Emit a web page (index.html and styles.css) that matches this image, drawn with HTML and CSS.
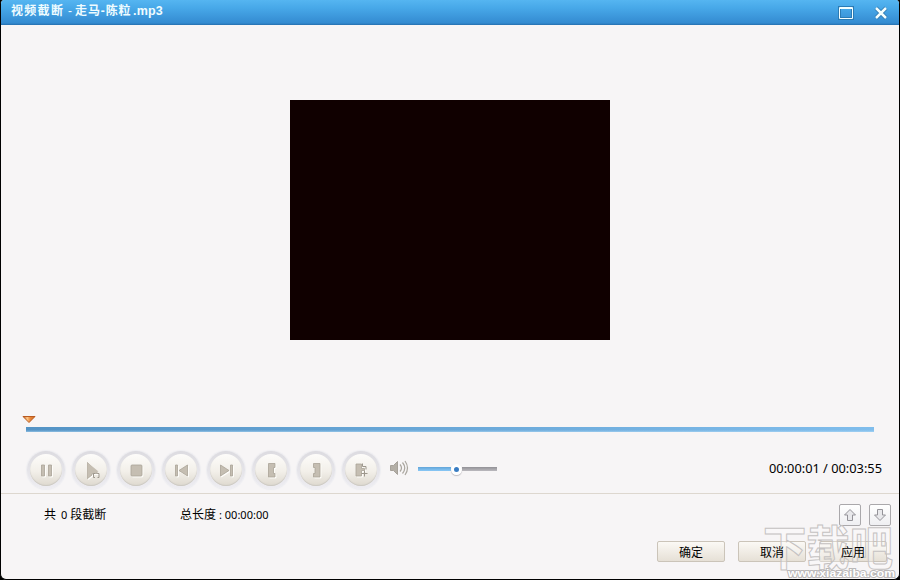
FILE: index.html
```html
<!DOCTYPE html>
<html lang="zh-CN">
<head>
    <meta charset="utf-8">
    <title>视频截断</title>
    <link rel="stylesheet" href="styles.css">
</head>
<body>

<div class="window">
    <div class="titlebar">
        <div class="title"><span class="title-cn">视频截断</span><span class="title-dash">-</span><span class="title-song">走马-陈粒</span><span class="title-ext">.mp3</span></div>
        <svg class="win-icon" width="16" height="14" viewBox="0 0 16 14">
            <path d="M1.5 1.5h13v11h-13z" fill="none" stroke="#2b7bb5" stroke-width="3"/>
            <path d="M1.5 1.5h13v11h-13zM1 2.5h14" fill="none" stroke="#f4ffff"/>
        </svg>
        <svg class="win-icon" width="16" height="14" viewBox="0 0 16 14">
            <path d="M3 2l10 10M13 2L3 12" stroke="#2b74ac" stroke-width="4"/>
            <path d="M3 2l10 10M13 2L3 12" stroke="#f4ffff" stroke-width="2.5"/>
        </svg>
    </div>

    <div class="preview">
        <div class="video"></div>
    </div>

    <div class="timeline">
        <svg class="marker" width="14" height="9" viewBox="0 0 14 9">
            <defs>
                <linearGradient id="orange" x1="0" x2="1">
                    <stop offset="0" stop-color="#b8571f"/>
                    <stop offset=".35" stop-color="#ffc888"/>
                    <stop offset=".6" stop-color="#e8883a"/>
                    <stop offset="1" stop-color="#cd661c"/>
                </linearGradient>
            </defs>
            <path d="M1 1.5h12L7 7.5z" fill="url(#orange)" stroke="#b95a20"/>
        </svg>
        <div class="track"></div>
    </div>

    <div class="controls">
        <button class="round-btn"><svg width="22" height="22" viewBox="0 0 22 22"><path class="glyph" d="M5.5 5h3v11h-3zM12.5 5h3v11h-3z"/></svg></button>
        <button class="round-btn"><svg width="22" height="22" viewBox="0 0 22 22"><path class="glyph" d="M6.5 2.5v16l4.500-3.500v-1.500h6z"/><path class="glyph-fill" d="M6.500 2.500L17.500 11.500L11 13.500L6.500 18.500z"/><path class="bracket" d="M14 13.500h-1.500v4h1.500M16.500 13.500h1.500v4h-1.500"/></svg></button>
        <button class="round-btn"><svg width="22" height="22" viewBox="0 0 22 22"><rect class="glyph" x="5" y="5" width="11" height="11" rx="1"/></svg></button>
        <button class="round-btn"><svg width="22" height="22" viewBox="0 0 22 22"><path class="glyph" d="M4.500 5h2v11h-2zM16.500 5v11L8 10.500z"/></svg></button>
        <button class="round-btn"><svg width="22" height="22" viewBox="0 0 22 22"><path class="glyph" d="M14.500 5h2v11h-2zM4.500 5v11L13 10.500z"/></svg></button>
        <button class="round-btn"><svg width="22" height="22" viewBox="0 0 22 22"><path class="glyph" d="M7.500 3.500h6.500v4h-1.500v6H14v3.500H7.500z"/></svg></button>
        <button class="round-btn"><svg width="22" height="22" viewBox="0 0 22 22"><path class="glyph" d="M14 3.500H7.500v4H9v6H7.500v3.500H14z"/></svg></button>
        <button class="round-btn"><svg width="22" height="22" viewBox="0 0 22 22"><path class="glyph" d="M5 4h5.500v4.500h3v2h-3V16H5z"/><path class="bracket" d="M11.500 3.500v3h3.500v3M10.500 13.500h6M13.500 10.500v6"/></svg></button>

        <svg class="speaker" width="20" height="18" viewBox="0 0 20 18">
            <path d="M1.500 6.500h3l4-4v13l-4-4h-3z" fill="#b3aea6" stroke="#a6a19a"/>
            <path d="M11 5.500q3 3.500 0 7M13.500 3.500q4.500 5.500 0 11M16 2q5 7 0 14" fill="none" stroke="#aaa69f" stroke-width="1.200"/>
        </svg>
        <div class="volume">
            <div class="volume-on"></div>
            <div class="knob"></div>
            <div class="volume-off"></div>
        </div>
        <div class="time">00:00:01 / 00:03:55</div>
    </div>

    <div class="footer">
        <div class="info">
            <div class="count">共<span class="num">0</span>段截断</div>
            <div class="total">总长度<span class="total-time">: 00:00:00</span></div>
            <div class="arrows">
                <button class="arrow-btn"><svg width="14" height="14" viewBox="0 0 14 14"><path d="M7 1.500l5.500 5.500h-3v5.500h-5v-5.500h-3z"/></svg></button>
                <button class="arrow-btn"><svg width="14" height="14" viewBox="0 0 14 14"><path d="M7 12.500l5.500-5.500h-3v-5.500h-5v5.500h-3z"/></svg></button>
            </div>
        </div>
        <div class="actions">
            <button class="btn"><span class="label">确定</span></button>
            <button class="btn"><span class="label">取消</span></button>
            <button class="btn"><span class="label">应用</span></button>
        </div>
    </div>

    <svg class="watermark" width="140" height="60" viewBox="0 0 140 60">
        <text class="mark-cn" x="4" y="46" textLength="130" lengthAdjust="spacingAndGlyphs">下载吧</text>
        <text class="mark-url" x="29" y="58" textLength="107" lengthAdjust="spacingAndGlyphs">www.xiazaiba.com</text>
    </svg>
</div>

</body>
</html>
```

FILE: styles.css
```css
* {
    box-sizing: border-box;
}
body {
    margin: 0;
    background: #000;
    font-family: "Noto Sans", "Noto Sans CJK SC", sans-serif;
    font-size: 12px;
    color: #000;
}
button {
    padding: 0;
    font-family: inherit;
}
.window {
    position: relative;
    display: flex;
    flex-direction: column;
    width: 900px;
    height: 580px;
    border: 1px solid #000;
    border-top: none;
    border-radius: 4px 4px 6px 6px;
    background: #f7f5f6;
    overflow: hidden;
}
.titlebar {
    display: flex;
    align-items: center;
    gap: 19px;
    flex: none;
    height: 25px;
    margin: 0 -1px;
    padding: 1px 11px 0 11px;
    background: linear-gradient(#55b5f1, #48a9e9 30%, #348bd1 92%, #256fae);
}
.title {
    display: flex;
    flex: 1;
    margin-top: -5px;
    color: #effcff;
    font-family: "Liberation Sans", "Noto Sans CJK SC", sans-serif;
    font-weight: bold;
    line-height: 18px;
    white-space: pre;
}
.title-cn {
    width: 57px;
    letter-spacing: 1.3px;
}
.title-dash {
    width: 7px;
    font-weight: normal;
}
.title-song {
    width: 58px;
    letter-spacing: 0.9px;
}
.title-ext {
    font-size: 12.5px;
    letter-spacing: 0.2px;
}
.win-icon {
    flex: none;
}
.preview {
    display: flex;
    justify-content: center;
    flex: none;
    height: 390px;
    padding-top: 75px;
}
.video {
    width: 320px;
    height: 240px;
    background: #100000;
}
.timeline {
    flex: none;
    height: 36px;
    padding: 0 25px;
}
.marker {
    display: block;
    margin-left: -4px;
}
.track {
    height: 5px;
    margin-top: 3px;
    background: linear-gradient(to bottom, rgba(255,255,255,0) 60%, rgba(190,225,248,0.55)), linear-gradient(to right, #5493c5, #80bdec);
}
.controls {
    display: flex;
    align-items: flex-start;
    flex: none;
    height: 42px;
    padding: 0 17px 0 26px;
}
.round-btn {
    display: flex;
    align-items: center;
    justify-content: center;
    flex: none;
    width: 38px;
    height: 38px;
    margin-right: 7px;
    border: 3px solid transparent;
    border-radius: 50%;
    background: linear-gradient(#fdfcfa, #f2efe9 55%, #ded9cf) padding-box, linear-gradient(#dcdbe0, #eeedf2) border-box;
    box-shadow: 0 0 1px 1px #ededf1, inset 0 -1px 1px #cbc8c2;
}
.round-btn svg {
    flex: none;
    margin-top: 2px;
    margin-left: 1px;
}
.glyph {
    fill: #c5beb2;
    stroke: #aaa397;
    stroke-width: 0.8;
    filter: drop-shadow(1px 1px 0 #fffefb);
}
.glyph-fill {
    fill: #c5beb2;
}
.bracket {
    fill: none;
    stroke: #9d978d;
    stroke-width: 1;
}
.speaker {
    flex: none;
    margin: 8px 9px 0 2px;
}
.volume {
    display: flex;
    align-items: center;
    width: 79px;
    height: 12px;
    margin-top: 12px;
}
.volume-on {
    width: 33px;
    height: 4px;
    background: linear-gradient(#62a5d9, #8ac8f6);
}
.knob {
    width: 11px;
    height: 11px;
    border: 3px solid #fff;
    border-radius: 50%;
    background: #397cc2;
    box-shadow: 0 1px 1px #c0bdc2;
}
.volume-off {
    flex: 1;
    height: 4px;
    background: linear-gradient(#929196, #bbb9be);
}
.time {
    margin: 8px 0 0 auto;
    font-size: 12.8px;
    line-height: 18px;
    white-space: nowrap;
}
.footer {
    flex: 1;
    border-top: 1px solid #ddd7cf;
}
.info {
    display: flex;
    height: 47px;
    padding: 10px 8px 0 43px;
    line-height: 22px;
}
.count {
    width: 136px;
}
.num {
    margin: 0 3px 0 5px;
    font-size: 11px;
}
.total-time {
    margin-left: 3px;
    font-size: 11px;
}
.arrows {
    display: flex;
    gap: 8px;
    margin-left: auto;
}
.arrow-btn {
    display: flex;
    align-items: center;
    justify-content: center;
    width: 22px;
    height: 22px;
    border: 1px solid #aaa8ab;
    border-radius: 2px;
    background: linear-gradient(#fff, #efeff2);
}
.arrow-btn path {
    fill: #e8e8eb;
    stroke: #949399;
}
.actions {
    display: flex;
    justify-content: flex-end;
    gap: 13px;
    padding-right: 12px;
}
.btn {
    width: 68px;
    height: 21px;
    border: 1px solid #cbc4b9;
    border-radius: 2px;
    background: linear-gradient(#fbf9f5, #e6e0d6);
    color: #000;
    font-size: 12px;
    line-height: 21px;
}
.label {
    position: relative;
    z-index: 2;
}
/* site mark lies over the bottom right buttons */
.watermark {
    position: absolute;
    z-index: 1;
    right: 0;
    bottom: 0;
    pointer-events: none;
}
.mark-cn {
    fill: rgba(255,255,255,0.3);
    stroke: #c4c1c1;
    stroke-width: 1;
    font-family: "Noto Sans CJK SC", sans-serif;
    font-size: 47px;
    font-weight: bold;
}
.mark-url {
    fill: #fff;
    stroke: #bbb8b8;
    stroke-width: 2;
    paint-order: stroke;
    font-family: "Liberation Sans", sans-serif;
    font-size: 11.5px;
    font-weight: bold;
}
```
